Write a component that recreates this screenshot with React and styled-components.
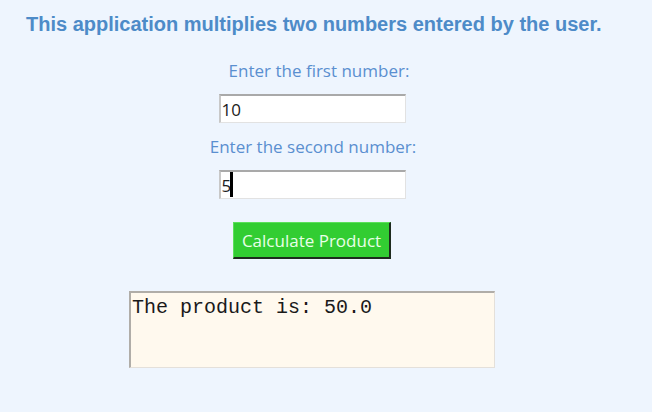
import styled, { createGlobalStyle } from 'styled-components';

const GlobalStyle = createGlobalStyle`
    html, body {
        margin: 0;
        padding: 0;
        background-color: #EEF5FE;
    }
`

export default function App() {
    return (
        <Page>
            <GlobalStyle />
            <Titulo>This application multiplies two numbers entered by the user.</Titulo>
            <Formulario>
                <Rotulo deslocamento={7}>Enter the first number:</Rotulo>
                <Campo type="text" defaultValue="10" />
                <Rotulo deslocamento={1}>Enter the second number:</Rotulo>
                <CampoBox>
                    <Campo type="text" defaultValue="5" />
                    <Cursor />
                </CampoBox>
                <Botao>Calculate Product</Botao>
                <Resultado readOnly defaultValue="The product is: 50.0" />
            </Formulario>
        </Page>
    )
}

const Page = styled.div`
    width: 652px;
    height: 412px;
    box-sizing: border-box;
    padding-top: 12px;
    background-color: #EEF5FE;
`
const Titulo = styled.h1`
    margin: 0;
    padding-left: 26px;
    font-family: 'Liberation Sans', Arial, sans-serif;
    font-weight: 700;
    font-size: 20px;
    line-height: 24px;
    color: #4D8BC8;
`
const Formulario = styled.div`
    width: 624px;
    display: flex;
    flex-direction: column;
    align-items: center;
    padding-top: 23px;
`
const Rotulo = styled.p`
    margin: 0 0 12px 0;
    font-family: 'Open Sans', sans-serif;
    font-size: 17px;
    line-height: 23px;
    color: #5A8FD0;
    transform: translateX(${props => props.deslocamento}px);
`
const CampoBox = styled.div`
    position: relative;
`
const Campo = styled.input`
    display: block;
    width: 187px;
    height: 29px;
    box-sizing: border-box;
    margin: 0 0 12px 0;
    padding: 0 1px;
    border: 1px solid #E2E2E2;
    border-top: 2px solid #A9A9A9;
    border-left: 2px solid #C8C8C8;
    background-color: #FFFFFF;
    font-family: 'Open Sans', sans-serif;
    font-size: 17px;
    color: #202020;
    outline: none;
`
const Cursor = styled.span`
    position: absolute;
    left: 11px;
    top: 2px;
    width: 3px;
    height: 25px;
    background-color: #000000;
`
const Botao = styled.button`
    width: 158px;
    height: 37px;
    margin-top: 11px;
    padding: 0;
    box-sizing: border-box;
    border: none;
    border-right: 2px solid #1E2A1E;
    border-bottom: 2px solid #1E2A1E;
    border-top: 1px solid #5BE05B;
    border-left: 1px solid #5BE05B;
    background-color: #32CD32;
    font-family: 'Open Sans', sans-serif;
    font-size: 17px;
    color: #E8FFE8;
`
const Resultado = styled.textarea`
    display: block;
    width: 366px;
    height: 77px;
    margin-top: 32px;
    box-sizing: border-box;
    padding: 3px 1px;
    resize: none;
    border: 1px solid #E4E0DA;
    border-top: 2px solid #B0ADA8;
    border-left: 2px solid #B0ADA8;
    background-color: #FFF9EE;
    font-family: 'Liberation Mono', 'Courier New', monospace;
    font-size: 20px;
    color: #1A1A1A;
    outline: none;
`
